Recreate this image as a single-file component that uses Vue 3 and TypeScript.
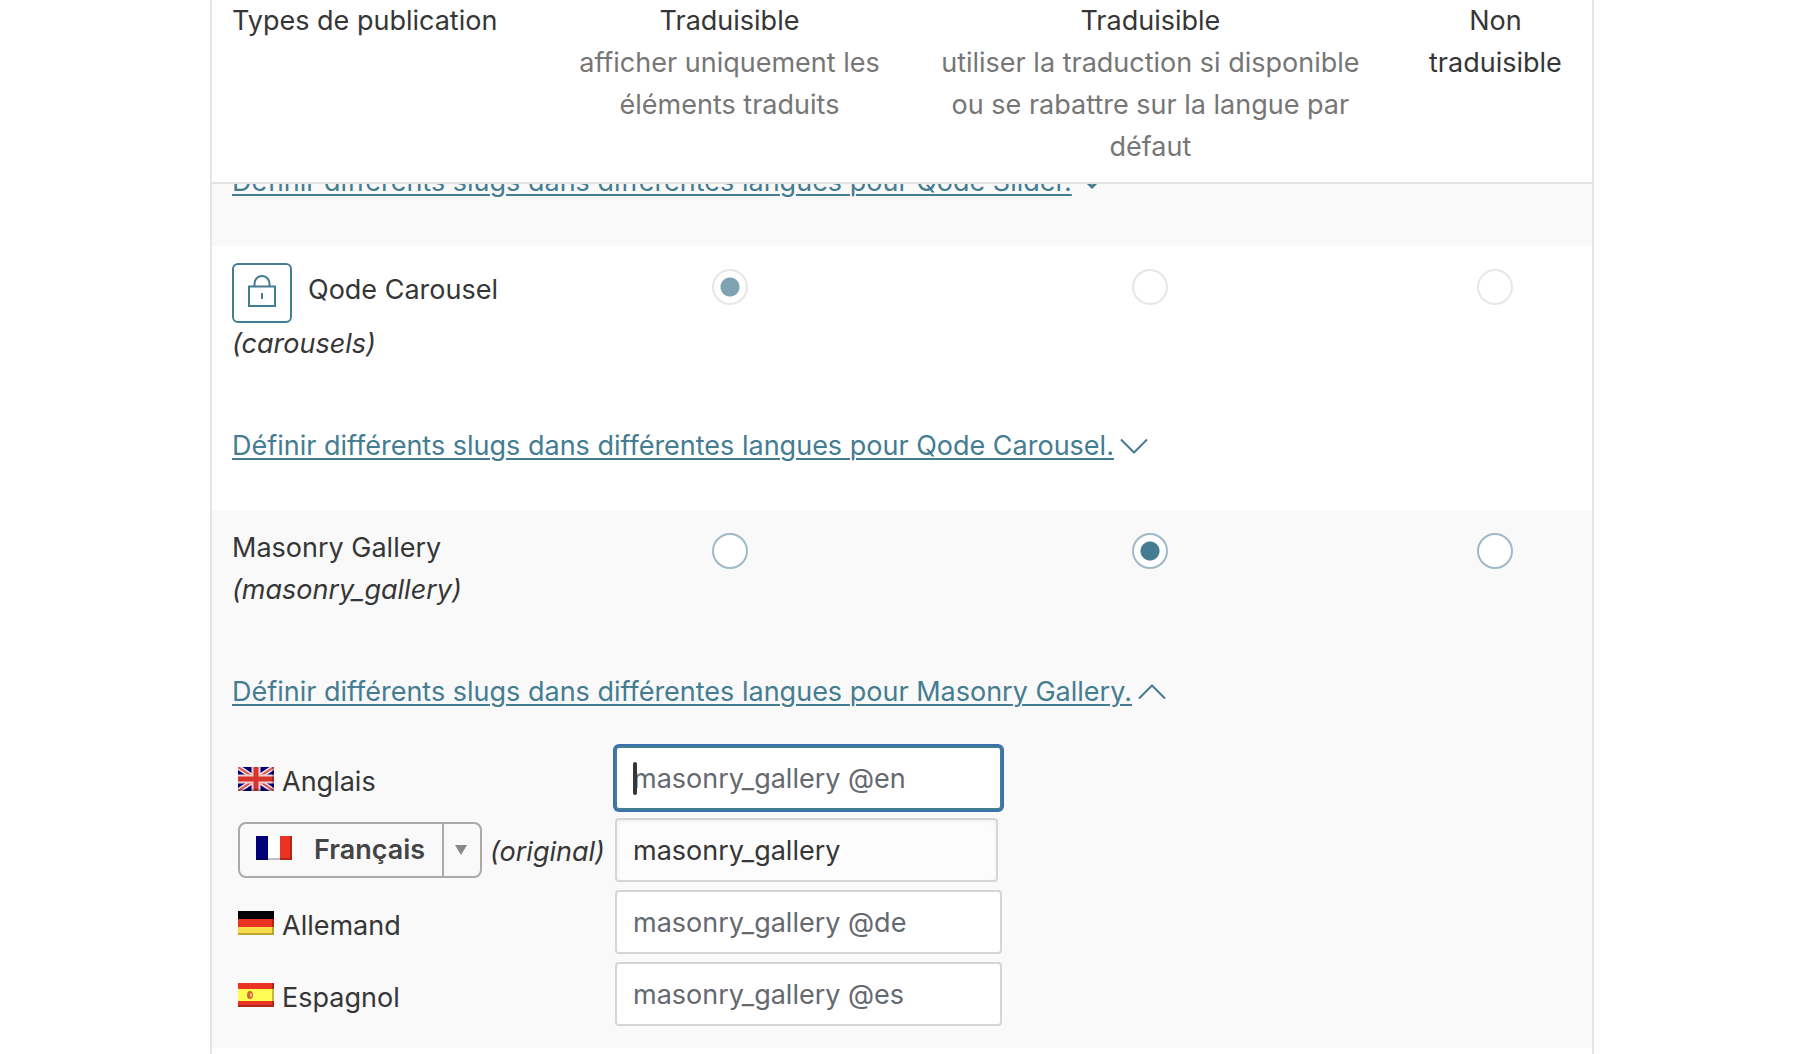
<script setup lang="ts">
import { reactive, ref } from 'vue'

type Mode = 'translate' | 'fallback' | 'none'
type Flag = 'gb' | 'fr' | 'de' | 'es'

interface PostType {
  id: string
  name: string
  slug: string
  locked: boolean
  open: boolean
  mode: Mode
}

interface SlugField {
  code: string
  label: string
  flag: Flag
  original: boolean
  placeholder: string
  value: string
}

const modes: { key: Mode; label: string }[] = [
  { key: 'translate', label: 'Traduisible, afficher uniquement les éléments traduits' },
  { key: 'fallback', label: 'Traduisible, utiliser la traduction si disponible' },
  { key: 'none', label: 'Non traduisible' },
]

const postTypes = reactive<PostType[]>([
  { id: 'carousels', name: 'Qode Carousel', slug: 'carousels', locked: true, open: false, mode: 'translate' },
  { id: 'masonry', name: 'Masonry Gallery', slug: 'masonry_gallery', locked: false, open: true, mode: 'fallback' },
])

const slugFields = reactive<SlugField[]>([
  { code: 'en', label: 'Anglais', flag: 'gb', original: false, placeholder: 'masonry_gallery @en', value: '' },
  { code: 'fr', label: 'Français', flag: 'fr', original: true, placeholder: '', value: 'masonry_gallery' },
  { code: 'de', label: 'Allemand', flag: 'de', original: false, placeholder: 'masonry_gallery @de', value: '' },
  { code: 'es', label: 'Espagnol', flag: 'es', original: false, placeholder: 'masonry_gallery @es', value: '' },
])

const originalLanguage = ref('fr')
const activeField = ref('en')
</script>

<template>
  <main class="page">
    <div class="panel">
      <table class="types">
        <colgroup>
          <col class="col-name" />
          <col class="col-translate" />
          <col class="col-fallback" />
          <col class="col-none" />
        </colgroup>
        <thead>
          <tr>
            <th scope="col" class="left">Types de publication</th>
            <th scope="col">Traduisible<span class="hint">afficher uniquement les éléments traduits</span></th>
            <th scope="col">
              Traduisible<span class="hint">utiliser la traduction si disponible ou se rabattre sur la langue par défaut</span>
            </th>
            <th scope="col">Non traduisible</th>
          </tr>
        </thead>

        <!-- Row scrolled halfway under the header -->
        <tbody class="shaded">
          <tr>
            <td colspan="4" class="flush">
              <div class="scrolled">
                <p class="slug-link">
                  <a href="#qode-slider">Définir différents slugs dans différentes langues pour Qode Slider.</a>
                  <svg class="chevron-small" viewBox="0 0 16 20" aria-hidden="true">
                    <path d="M1.500 8.500 8 15l6.500-6.500" />
                  </svg>
                </p>
              </div>
            </td>
          </tr>
        </tbody>

        <tbody v-for="type in postTypes" :key="type.id" :class="{ shaded: !type.locked }">
          <tr>
            <td class="name-cell">
              <div class="name">
                <button v-if="type.locked" type="button" class="lock" aria-label="Déverrouiller">
                  <svg viewBox="0 0 28 34" aria-hidden="true">
                    <path d="M1 12.500h26v19.500H1zM6.500 12V9.500a7.500 7.500 0 0 1 15 0V12" />
                    <path d="M14 19v6" />
                  </svg>
                </button>
                <span :class="{ 'beside-lock': type.locked }">{{ type.name }}</span>
              </div>
              <em>({{ type.slug }})</em>
            </td>
            <td v-for="mode in modes" :key="mode.key" class="choice">
              <input
                v-model="type.mode"
                type="radio"
                :name="type.id"
                :value="mode.key"
                :disabled="type.locked"
                :aria-label="mode.label"
              />
            </td>
          </tr>
          <tr>
            <td colspan="4" class="slug-cell" :class="{ open: type.open }">
              <p class="slug-link">
                <a :href="'#' + type.id" @click.prevent="type.open = !type.open"
                  >Définir différents slugs dans différentes langues pour {{ type.name }}.</a
                ><svg class="chevron" viewBox="0 0 28 18" aria-hidden="true">
                  <path :d="type.open ? 'M1 15.500 14 2.500l13 13' : 'M1 2.500l13 13 13-13'" />
                </svg>
              </p>

              <div v-if="type.open" class="slugs">
                <div v-for="field in slugFields" :key="field.code" class="slug-row">
                  <div class="language">
                    <span v-if="field.original" class="picker">
                      <select v-model="originalLanguage" aria-label="Langue d'origine">
                        <option v-for="l in slugFields" :key="l.code" :value="l.code">{{ l.label }}</option>
                      </select>
                      <svg class="flag picker-flag" viewBox="0 0 36 24" aria-hidden="true">
                        <path fill="#00007a" d="M0 0h12v24H0z" />
                        <path fill="#fff" d="M12 0h12v24H12z" />
                        <path fill="#ea3323" d="M24 0h12v24H24z" />
                        <path class="shade" d="M0 22h34V0h2v24H0z" />
                      </svg>
                      <svg class="picker-arrow" viewBox="0 0 12 10" aria-hidden="true">
                        <path fill="#888" d="M0 0h12L6 10z" />
                      </svg>
                    </span>
                    <svg v-else class="flag" viewBox="0 0 36 24" aria-hidden="true">
                      <g v-if="field.flag === 'gb'">
                        <path fill="#00007a" d="M0 0h36v24H0z" />
                        <path stroke="#f4dfe2" stroke-width="5" d="M0 0l36 24M36 0 0 24" />
                        <path stroke="#e2574f" stroke-width="2" d="M0 0l36 24M36 0 0 24" />
                        <path stroke="#f3cfcf" stroke-width="9" d="M18 0v24M0 12h36" />
                        <path stroke="#d8342b" stroke-width="5" d="M18 0v24M0 12h36" />
                      </g>
                      <g v-else-if="field.flag === 'de'">
                        <path d="M0 0h36v8H0z" />
                        <path fill="#ea3323" d="M0 8h36v8H0z" />
                        <path fill="#f9dc4a" d="M0 16h36v8H0z" />
                      </g>
                      <g v-else>
                        <path fill="#ea3323" d="M0 0h36v24H0z" />
                        <path fill="#fffd54" d="M0 6h36v12H0z" />
                        <ellipse fill="#d9622b" cx="12" cy="12" rx="3" ry="4" />
                        <ellipse fill="#e8c9b0" cx="13" cy="12" rx="1" ry="2" />
                      </g>
                      <path class="shade" d="M0 22h34V0h2v24H0z" />
                    </svg>
                    <em v-if="field.original" class="original">(original)</em>
                    <label v-else :for="'slug-' + field.code">{{ field.label }}</label>
                  </div>
                  <div class="field">
                    <input
                      :id="'slug-' + field.code"
                      v-model="field.value"
                      type="text"
                      :readonly="field.original"
                      :aria-label="field.label"
                      :placeholder="field.placeholder"
                      :class="{ active: activeField === field.code }"
                      @focus="activeField = field.code"
                    />
                    <span v-if="activeField === field.code && !field.value" class="caret" aria-hidden="true"></span>
                  </div>
                </div>
              </div>
            </td>
          </tr>
        </tbody>
      </table>
    </div>
  </main>
</template>

<style>
body {
  background: #fff;
}
</style>

<style scoped>
.page {
  padding: 0 224px 0 210px;
  color: #363636;
  font-family: Inter, 'Liberation Sans', sans-serif;
  font-size: 27px;
  line-height: 42px;
}
.panel {
  box-sizing: border-box;
  min-height: 100vh;
  border: solid #e5e5e5;
  border-width: 0 2px;
}
.types {
  width: 100%;
  table-layout: fixed;
  border-collapse: separate;
  border-spacing: 0;
}
.col-name,
.col-translate {
  width: 25%;
}
.col-fallback {
  width: 36%;
}
.col-none {
  width: 14%;
}
th {
  padding: 0 20px 14px;
  border-bottom: 2px solid #e2e2e2;
  font-weight: 400;
  vertical-align: top;
}
.left {
  text-align: left;
}
.hint {
  display: block;
  color: #767676;
}
td {
  padding: 17px 20px 0;
  vertical-align: top;
}
.shaded {
  background: #f9f9f9;
}
.flush {
  padding-top: 0;
}
.scrolled {
  display: flex;
  align-items: flex-end;
  height: 62px;
  overflow: hidden;
}
.scrolled .slug-link {
  padding-bottom: 43px;
}
.name-cell {
  padding-bottom: 60px;
  white-space: nowrap;
}
.name {
  display: flex;
  align-items: center;
  gap: 16px;
}
.beside-lock {
  padding-bottom: 6px;
}
.lock {
  display: flex;
  align-items: center;
  justify-content: center;
  width: 60px;
  height: 60px;
  padding: 0 0 4px;
  border: 2px solid #447c92;
  border-radius: 6px;
  background: #fff;
}
.lock svg {
  width: 28px;
  height: 34px;
  fill: none;
  stroke: #447c92;
  stroke-width: 2;
}
.choice {
  text-align: center;
  line-height: 0;
}
.choice input {
  box-sizing: border-box;
  appearance: none;
  width: 36px;
  height: 36px;
  margin: 6px 0 0;
  border: 2px solid #9fbac6;
  border-radius: 50%;
  background: #fff;
}
.choice input:checked {
  background: radial-gradient(circle, #447c92 0 9px, #fff 10px);
}
.choice input:disabled {
  border-color: #e7e7e7;
}
.choice input:disabled:checked {
  background: radial-gradient(circle, #7ea2b1 0 9px, #fff 10px);
}
.slug-cell {
  padding-top: 0;
  padding-bottom: 43px;
}
.slug-cell.open {
  padding-bottom: 18px;
}
.slug-link {
  display: flex;
  align-items: center;
  margin: 0;
  white-space: nowrap;
}
.slug-link a {
  color: #447c92;
  text-decoration-thickness: 2px;
  text-underline-offset: 3px;
}
.chevron,
.chevron-small {
  fill: none;
  stroke: #447c92;
}
.chevron {
  width: 28px;
  height: 18px;
  margin-left: 6px;
  stroke-width: 2;
}
.chevron-small {
  width: 16px;
  height: 20px;
  margin-left: 12px;
  stroke-width: 3;
}
.slugs {
  padding: 29px 0 0;
}
.slug-row {
  display: grid;
  grid-template-columns: 377px auto;
  align-items: center;
  justify-content: start;
  height: 72px;
  padding-left: 6px;
}
.language {
  display: flex;
  align-items: center;
  white-space: nowrap;
}
.language label {
  padding-top: 8px;
}
.original {
  padding-top: 4px;
}
.flag {
  width: 36px;
  height: 24px;
}
.language > .flag {
  margin: 2px 8px 0 0;
}
.shade {
  fill: #000;
  opacity: 0.25;
}
.picker {
  position: relative;
  display: flex;
  margin-right: 8px;
}
.picker select {
  box-sizing: border-box;
  appearance: none;
  width: 244px;
  height: 56px;
  padding: 0 0 0 74px;
  border: 2px solid #aaa;
  border-radius: 8px;
  background: linear-gradient(#aaa, #aaa) right 36px top / 2px 100% no-repeat;
  color: #444;
  font: inherit;
  font-weight: 600;
}
.picker-flag,
.picker-arrow {
  position: absolute;
  pointer-events: none;
}
.picker-flag {
  top: 14px;
  left: 18px;
}
.picker-arrow {
  top: 23px;
  right: 15px;
  width: 12px;
  height: 10px;
}
.field {
  position: relative;
}
.field input {
  display: block;
  box-sizing: border-box;
  width: 387px;
  height: 64px;
  padding: 0 16px;
  border: 2px solid #d5d5d5;
  border-radius: 4px;
  outline: none;
  background: #fff;
  color: #363636;
  font: inherit;
  caret-color: transparent;
}
.field input::placeholder {
  color: #646970;
  opacity: 1;
}
.field input:read-only {
  width: 383px;
  background: #fcfcfc;
  box-shadow: inset 0 2px 4px #f1f1f1;
}
.field input.active {
  border-color: #447c92;
  box-shadow: 0 0 0 2px #3a70b0;
}
.caret {
  position: absolute;
  top: 16px;
  left: 18px;
  width: 4px;
  height: 33px;
  border-radius: 2px;
  background: #363636;
}
</style>
